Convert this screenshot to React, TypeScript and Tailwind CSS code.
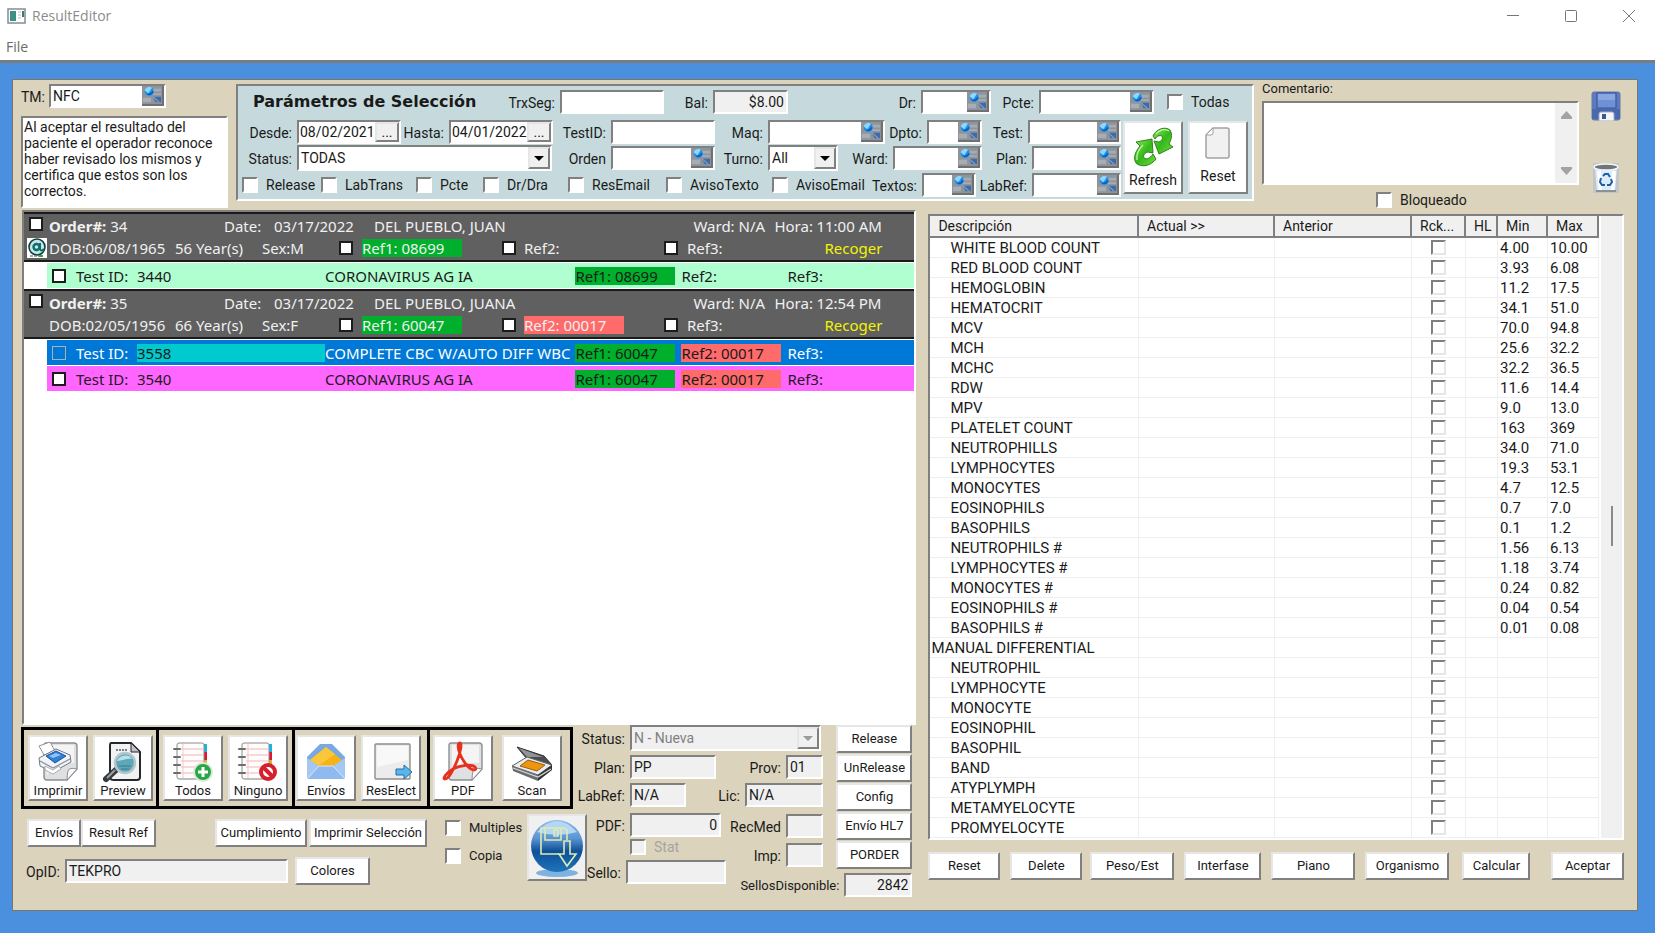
import React from "react";
import clsx from "clsx";

const SUNKEN =
  "border-2 border-t-[#808080] border-l-[#808080] border-b-white border-r-white";
const RAISED =
  "border-2 border-t-[#e6e6e6] border-l-[#e6e6e6] border-b-[#808080] border-r-[#808080]";

/* ---------- Icons ---------- */

const LookupIcon = () => (
  <svg viewBox="0 0 22 20" className="w-full h-full" preserveAspectRatio="none">
    <rect width="22" height="20" fill="#8e949c" />
    <path d="M12 3h9v3h-9zM12 8h9v2h-9z" fill="#a6abb2" />
    <path d="M12 12h9v6h-6z" fill="#3f6aa6" />
    <path d="M1 13h9v5H1z" fill="#a8adb3" />
    <path d="m10 10 9 8" stroke="#7f9cc4" strokeWidth="1.4" />
    <circle cx="8" cy="6" r="5" fill="#1d8fe6" />
    <path d="M3 5a5 5 0 0 1 8-3L7 8z" fill="#8fd6ff" />
    <path d="M6 9c3 1 5-1 6-3" stroke="#0a5cb8" strokeWidth="1.5" fill="none" />
  </svg>
);

const RefreshIcon = () => (
  <svg viewBox="0 0 40 40" className="w-10 h-10">
    <defs>
      <linearGradient id="green" x1="0" y1="0" x2="1" y2="1">
        <stop offset="0" stopColor="#8be85a" />
        <stop offset="0.5" stopColor="#35b81c" />
        <stop offset="1" stopColor="#6fdd3c" />
      </linearGradient>
    </defs>
    <g fill="url(#green)" stroke="#22780f" strokeWidth="0.9" strokeLinejoin="round">
      <path d="M3 15 19 12l1 14-5-1c-4 1-5 4-4 6 3 2 6 0 9-4l3 5c-5 7-15 9-20 4-3-5-1-11 4-17z" />
      <path d="M20 9C23 2 32-1 37 3c3 5 1 10-1 14l4 3-14 7-5-13 5 1c3-1 4-4 3-6-3-1-5 0-7 3z" />
    </g>
    <path d="M23 7c3-4 9-6 13-3M4 33c-1-6 2-11 6-15" stroke="#c8f9ab" strokeWidth="1.2" fill="none" />
  </svg>
);

const PageIcon = () => (
  <svg viewBox="0 0 26 32" className="w-[26px] h-8">
    <path
      d="M8 1h14a2 2 0 0 1 2 2v26a2 2 0 0 1-2 2H3a2 2 0 0 1-2-2V8z"
      fill="#f1f1f2"
      stroke="#a2a2a4"
      strokeWidth="1.5"
    />
    <path d="M8 1v5a2 2 0 0 1-2 2H1z" fill="#fff" stroke="#a2a2a4" />
  </svg>
);

const FloppyIcon = () => (
  <svg viewBox="0 0 30 30" className="w-[30px] h-[30px]">
    <rect x="1" y="1" width="28" height="28" rx="2" fill="#5b7abf" stroke="#6579a8" />
    <rect x="6" y="2" width="19" height="15" fill="#6f90d2" stroke="#34519a" />
    <path d="M7 3h17v6H7z" fill="#8aa6de" />
    <path d="M1 18h28v10H1z" fill="#4a68ac" />
    <path d="M8 30v-7q0-2 2-2h11q2 0 2 2v7z" fill="#f3f5f9" stroke="#a3adc4" />
    <rect x="11" y="23" width="4" height="5" fill="#3c5794" />
  </svg>
);

const TrashIcon = () => (
  <svg viewBox="0 0 26 30" className="w-[26px] h-[30px]">
    <rect width="26" height="30" fill="#c3c6c9" />
    <path d="M2 4h22l-2 25H4z" fill="#dcecfb" />
    <path d="M4 8h4l1 20H6zM19 8h4l-2 20h-3z" fill="#fff" />
    <ellipse cx="13" cy="4" rx="12" ry="3" fill="#70757b" stroke="#f4f6f8" strokeWidth="1.5" />
    <path d="M3 28h20" stroke="#8a9299" strokeWidth="2" />
    <g fill="none" stroke="#1d5fa8" strokeWidth="2">
      <path d="m10 13 2-2h3l2 3" />
      <path d="m8 15-1 4 2 3h3" />
      <path d="m18 16 1 3-2 3h-3" />
    </g>
  </svg>
);

const Sheet = () => (
  <>
    <path
      d="M10 2h28q3 0 3 3v23L31 39H11q-3 0-3-3V5q0-3 2-3z"
      fill="#dfe0e2"
      stroke="#8c8e92"
      strokeWidth="1.4"
    />
    <path d="M11 4h27v18Q20 20 11 34z" fill="#f4f4f5" />
    <path d="M41 28q-8-2-9 2-1 4-1 9z" fill="#fafafa" stroke="#8c8e92" />
  </>
);

const PrintIcon = () => (
  <svg viewBox="0 0 44 42" className="w-11 h-[42px]">
    <Sheet />
    <path d="m3 5 11-4 5 9-11 4z" fill="#fff" stroke="#8d9299" />
    <path d="M3 17 20 8l14 6 1 7-18 10L4 25z" fill="#f2f4f7" stroke="#717780" />
    <path d="m10 15 10-5 10 5-11 7z" fill="#2f7fd6" stroke="#1c559e" />
    <path d="m13 15 7-3 5 2-8 3z" fill="#8fc5f6" />
    <path d="m4 20 13 7 17-9" fill="none" stroke="#8d949e" strokeWidth="1.3" />
    <path d="m9 25 8 4 6-4 2 3-8 5-8-4z" fill="#fff" stroke="#a7adb5" />
  </svg>
);

const PreviewIcon = () => (
  <svg viewBox="0 0 44 42" className="w-11 h-[42px]">
    <path
      d="M10 2h20l9 9v25q0 3-3 3H13q-4 0-4-3V5q0-3 1-3z"
      fill="#f1f2f3"
      stroke="#26282b"
      strokeWidth="2"
    />
    <path d="M30 2v9h9z" fill="#bfc3c8" stroke="#26282b" />
    <path d="M15 9h12" stroke="#555" strokeWidth="1.4" strokeDasharray="2 1" />
    <path d="m16 28-11 10" stroke="#36393d" strokeWidth="6" strokeLinecap="round" />
    <path d="m14 29-8 8" stroke="#9ba0a6" strokeWidth="2" />
    <circle cx="24" cy="22" r="10" fill="#5fa7b8" stroke="#b8c6cc" strokeWidth="2.4" />
    <path d="M16 20c2-6 12-8 15-2-5-1-9 2-15 2z" fill="#b4e2e9" />
    <path d="M18 25h12M20 28h8" stroke="#337d92" />
  </svg>
);

const Notebook = ({ children }: { children: React.ReactNode }) => (
  <svg viewBox="0 0 44 42" className="w-11 h-[42px]">
    <path d="M33 3h3v8h-3z" fill="#16b7e8" />
    <path d="M33 11h3v8h-3z" fill="#e01530" />
    <path d="M33 19h3v8h-3z" fill="#d9b928" />
    <rect x="6" y="2" width="27" height="36" rx="2" fill="#fdfdfd" stroke="#8c8c8c" />
    <path d="M8 37h24v2H8z" fill="#bdbdbd" />
    <path d="M10 8h22M10 14h22M10 20h22M10 26h22M10 32h22" stroke="#f5b3b3" />
    <path d="M12 3v34" stroke="#f1c9c9" />
    <path
      d="M3 8h6M3 16h6M3 24h6M3 32h6"
      stroke="#6e6e6e"
      strokeWidth="2"
      strokeLinecap="round"
    />
    {children}
  </svg>
);

const AllIcon = () => (
  <Notebook>
    <circle cx="32" cy="31" r="9" fill="#27a844" stroke="#dfe5df" strokeWidth="2" />
    <path d="M32 26v10M27 31h10" stroke="#fff" strokeWidth="3" />
  </Notebook>
);

const NoneIcon = () => (
  <Notebook>
    <circle cx="32" cy="31" r="7" fill="#fff" stroke="#d8202c" strokeWidth="4" />
    <path d="m27 26 10 10" stroke="#d8202c" strokeWidth="4" />
  </Notebook>
);

const EnvelopeIcon = () => (
  <svg viewBox="0 0 44 42" className="w-11 h-[42px]">
    <path d="M3 16 16 3h12l13 13v22H3z" fill="#76a9e6" />
    <path d="M6 19 22 6l16 13-16 13z" fill="#f5b316" />
    <path d="M6 19 22 6l9 7-17 12z" fill="#fbc73a" />
    <path d="m3 17 12 8L3 38zM41 17l-12 8 12 13z" fill="#a5c8f3" />
    <path d="m3 38 12-13h14l12 13z" fill="#8fb9ef" />
    <path d="m3 38 12-13h14l12 13" fill="none" stroke="#d9e9fc" />
  </svg>
);

const ResElectIcon = () => (
  <svg viewBox="0 0 44 42" className="w-11 h-[42px]">
    <rect x="6" y="3" width="35" height="35" rx="1" fill="#ececed" stroke="#8d8d8f" strokeWidth="1.4" />
    <path d="M8 5h31v14L8 26z" fill="#f8f8f8" />
    <path
      d="M27 28h8v-4l8 7-8 7v-4h-8z"
      fill="#58b6ef"
      stroke="#2a6d9c"
      strokeLinejoin="round"
    />
  </svg>
);

const PdfIcon = () => (
  <svg viewBox="0 0 44 42" className="w-11 h-[42px]">
    <Sheet />
    <path
      d="M19 2c-3 0-2 6 0 11s7 13 11 15 6 0 4-2c-3-3-15-2-22 2S1 38 4 38s8-8 12-18 5-18 3-18z"
      fill="none"
      stroke="#e7311f"
      strokeWidth="2.8"
      strokeLinejoin="round"
    />
  </svg>
);

const ScanIcon = () => (
  <svg viewBox="0 0 44 42" className="w-11 h-[42px]">
    <path d="m7 6 27 9 8 9-25-6z" fill="#4a4d50" stroke="#2f3133" />
    <path d="m9 7 24 9-16 0z" fill="#90959a" />
    <path d="m2 25 15-9 25 8-14 10z" fill="#ececec" stroke="#5c5f62" />
    <path d="m10 25 8-6 17 5-8 6z" fill="#ee9413" stroke="#9b5d08" />
    <path d="m2 25 26 9v6L3 30z" fill="#6a6d70" />
    <path d="m28 34 14-10v5L28 40z" fill="#303234" />
    <path d="m3 27 25 9 13-8" fill="none" stroke="#d3d6d9" strokeWidth="1.3" />
  </svg>
);

const SaveBallIcon = () => (
  <svg viewBox="0 0 56 60" className="w-14 h-[60px]">
    <defs>
      <linearGradient id="ball" x1="0" y1="0" x2="0" y2="1">
        <stop offset="0" stopColor="#8dbbea" />
        <stop offset="0.35" stopColor="#5b96d3" />
        <stop offset="0.6" stopColor="#0e4f97" />
        <stop offset="1" stopColor="#1d75bd" />
      </linearGradient>
    </defs>
    <ellipse cx="28" cy="55" rx="21" ry="4" fill="#7fb2df" />
    <circle cx="28" cy="28" r="26" fill="url(#ball)" />
    <path d="M8 14Q28-8 48 14q-20 6-40 0z" fill="#b6d6f5" />
    <g fill="none" stroke="#dcecb0" strokeWidth="1.6">
      <path d="M38 22V12l-3-2H12v26h18" />
      <path d="M16 10v12h16V10M25 12v6h4v-6z" />
      <path d="M35 23h6v13h6L38 48 30 36h5z" />
    </g>
  </svg>
);

const AtIcon = () => (
  <svg viewBox="0 0 20 20" className="w-5 h-5">
    <rect width="20" height="20" fill="#fff" />
    <circle cx="10" cy="9" r="8" fill="#c9e4e4" stroke="#10403f" strokeWidth="1.6" />
    <circle cx="9.500" cy="9" r="3" fill="none" stroke="#05706c" strokeWidth="2.4" />
    <path d="M13 5v6q1 3 4 0" fill="none" stroke="#05706c" strokeWidth="2" />
    <path d="M3 18h13" stroke="#555" strokeDasharray="3 1" />
    <path d="M12 17h4v2h-4z" fill="#3aa53a" />
  </svg>
);

/* ---------- Controls ---------- */

type InputProps = {
  id: string;
  value?: string;
  className?: string;
  readOnly?: boolean;
};

const TextField = ({ id, value = "", className, readOnly }: InputProps) => (
  <input
    id={id}
    type="text"
    defaultValue={value}
    readOnly={readOnly}
    className={clsx(
      SUNKEN,
      "w-full min-w-0 h-6 px-[2px] outline-none",
      readOnly ? "bg-[#f0f0f0]" : "bg-white",
      className
    )}
  />
);

const LookupField = ({ id, value = "" }: InputProps) => (
  <div className={clsx(SUNKEN, "flex h-6 min-w-0 bg-white")}>
    <input
      id={id}
      type="text"
      defaultValue={value}
      className="flex-1 min-w-0 px-[2px] outline-none"
    />
    <button
      type="button"
      aria-label="Buscar"
      className="w-[22px] shrink-0 border-r-2 border-b-2 border-[#707070]"
    >
      <LookupIcon />
    </button>
  </div>
);

const DateField = ({ id, value = "" }: InputProps) => (
  <div className={clsx(SUNKEN, "flex h-6 min-w-0 bg-white")}>
    <input
      id={id}
      type="text"
      defaultValue={value}
      className="flex-1 min-w-0 pl-px outline-none"
    />
    <button
      type="button"
      aria-label="Calendario"
      className={clsx(RAISED, "w-6 shrink-0 bg-[#f0f0f0] leading-none")}
    >
      ...
    </button>
  </div>
);

const SelectField = ({
  id,
  value,
  disabled,
}: {
  id: string;
  value: string;
  disabled?: boolean;
}) => (
  <div
    className={clsx(
      SUNKEN,
      "relative h-[26px] min-w-0",
      disabled ? "bg-[#f0f0f0] text-[#808080]" : "bg-white"
    )}
  >
    <select
      id={id}
      defaultValue={value}
      disabled={disabled}
      className="w-full h-full px-[2px] appearance-none outline-none"
    >
      <option>{value}</option>
    </select>
    <span
      aria-hidden="true"
      className={clsx(
        RAISED,
        "absolute right-0 inset-y-0 w-[22px] flex items-center justify-center bg-[#f0f0f0] pointer-events-none"
      )}
    >
      <svg viewBox="0 0 10 5" className="w-[10px] h-[5px]">
        <path d="M0 0h10L5 5z" fill={disabled ? "#9a9a9a" : "#000"} />
      </svg>
    </span>
  </div>
);

const FieldLabel = ({
  htmlFor,
  children,
}: {
  htmlFor: string;
  children: React.ReactNode;
}) => (
  <label
    htmlFor={htmlFor}
    className="flex justify-end pr-[5px] pt-[2px] whitespace-nowrap"
  >
    {children}
  </label>
);

const CheckField = ({
  label,
  disabled,
}: {
  label: string;
  disabled?: boolean;
}) => (
  <label
    className={clsx(
      "flex items-center gap-2 leading-4 whitespace-nowrap",
      disabled && "text-[#a5a5a0]"
    )}
  >
    <input
      type="checkbox"
      disabled={disabled}
      className={clsx(
        SUNKEN,
        "appearance-none w-4 h-4 shrink-0",
        disabled ? "bg-[#f0f0f0]" : "bg-white checked:bg-[#0078d7]"
      )}
    />
    {label}
  </label>
);

const BlackCheck = ({ label, plain }: { label: string; plain?: boolean }) => (
  <input
    type="checkbox"
    aria-label={label}
    className={clsx(
      "appearance-none block w-[14px] h-[14px]",
      plain ? "border border-[#b0b0b0]" : "border-2 border-[#1c1c1c] bg-white"
    )}
  />
);

const Button = ({
  children,
  className,
}: {
  children: React.ReactNode;
  className?: string;
}) => (
  <button
    type="button"
    className={clsx(
      RAISED,
      "h-7 bg-white text-[13px] text-center whitespace-nowrap",
      className
    )}
  >
    {children}
  </button>
);

const ToolButton = ({
  label,
  icon,
}: {
  label: string;
  icon: React.ReactNode;
}) => (
  <button
    type="button"
    className={clsx(
      RAISED,
      "w-[60px] h-[66px] flex flex-col items-center justify-between bg-white text-[13px] whitespace-nowrap leading-4 pt-1"
    )}
  >
    {icon}
    {label}
  </button>
);

/* ---------- Data ---------- */

type Test = {
  id: string;
  name: string;
  ref1: string;
  ref2?: string;
  tone: "mint" | "selected" | "pink";
};

type Order = {
  number: string;
  date: string;
  patient: string;
  time: string;
  dob: string;
  age: string;
  sex: string;
  ref1: string;
  ref2?: string;
  email?: boolean;
  tests: Test[];
};

const orders: Order[] = [
  {
    number: "34",
    date: "03/17/2022",
    patient: "DEL PUEBLO, JUAN",
    time: "11:00 AM",
    dob: "06/08/1965",
    age: "56",
    sex: "M",
    ref1: "08699",
    email: true,
    tests: [
      { id: "3440", name: "CORONAVIRUS AG IA", ref1: "08699", tone: "mint" },
    ],
  },
  {
    number: "35",
    date: "03/17/2022",
    patient: "DEL PUEBLO, JUANA",
    time: "12:54 PM",
    dob: "02/05/1956",
    age: "66",
    sex: "F",
    ref1: "60047",
    ref2: "00017",
    tests: [
      {
        id: "3558",
        name: "COMPLETE CBC W/AUTO DIFF WBC",
        ref1: "60047",
        ref2: "00017",
        tone: "selected",
      },
      {
        id: "3540",
        name: "CORONAVIRUS AG IA",
        ref1: "60047",
        ref2: "00017",
        tone: "pink",
      },
    ],
  },
];

const results: [string, string?, string?][] = [
  ["WHITE BLOOD COUNT", "4.00", "10.00"],
  ["RED BLOOD COUNT", "3.93", "6.08"],
  ["HEMOGLOBIN", "11.2", "17.5"],
  ["HEMATOCRIT", "34.1", "51.0"],
  ["MCV", "70.0", "94.8"],
  ["MCH", "25.6", "32.2"],
  ["MCHC", "32.2", "36.5"],
  ["RDW", "11.6", "14.4"],
  ["MPV", "9.0", "13.0"],
  ["PLATELET COUNT", "163", "369"],
  ["NEUTROPHILLS", "34.0", "71.0"],
  ["LYMPHOCYTES", "19.3", "53.1"],
  ["MONOCYTES", "4.7", "12.5"],
  ["EOSINOPHILS", "0.7", "7.0"],
  ["BASOPHILS", "0.1", "1.2"],
  ["NEUTROPHILS #", "1.56", "6.13"],
  ["LYMPHOCYTES #", "1.18", "3.74"],
  ["MONOCYTES #", "0.24", "0.82"],
  ["EOSINOPHILS #", "0.04", "0.54"],
  ["BASOPHILS #", "0.01", "0.08"],
  ["MANUAL DIFFERENTIAL"],
  ["NEUTROPHIL"],
  ["LYMPHOCYTE"],
  ["MONOCYTE"],
  ["EOSINOPHIL"],
  ["BASOPHIL"],
  ["BAND"],
  ["ATYPLYMPH"],
  ["METAMYELOCYTE"],
  ["PROMYELOCYTE"],
];

/* ---------- Sections ---------- */

const TitleBar = () => (
  <header className="h-[60px] bg-white font-['Open_Sans']">
    <div className="flex items-center h-8 pl-[7px] pr-5">
      <svg viewBox="0 0 19 16" className="w-[19px] h-4">
        <rect x="1" y="1" width="17" height="14" fill="#fff" stroke="#868c92" strokeWidth="1.5" />
        <rect x="3" y="3" width="6" height="10" fill="#3c8f86" />
        <path d="M11 4h3M11 7h3M11 10h3" stroke="#b5b9bd" />
        <path d="M15 3h2v6h-2z" fill="#3a7d74" />
      </svg>
      <span className="ml-[6px] text-sm text-[#8c8c8c]">ResultEditor</span>
      <div className="ml-auto flex gap-[46px] text-[#777]">
        <button type="button" aria-label="Minimizar">
          <svg viewBox="0 0 12 12" className="w-3 h-3">
            <path d="M0 5.500h12" stroke="currentColor" />
          </svg>
        </button>
        <button type="button" aria-label="Maximizar">
          <svg viewBox="0 0 12 12" className="w-3 h-3">
            <rect x=".5" y=".5" width="11" height="11" rx="1" fill="none" stroke="currentColor" />
          </svg>
        </button>
        <button type="button" aria-label="Cerrar">
          <svg viewBox="0 0 12 12" className="w-3 h-3">
            <path d="m0 0 12 12M12 0 0 12" stroke="currentColor" />
          </svg>
        </button>
      </div>
    </div>
    <nav className="pl-[6px] text-sm leading-[30px] text-[#6b6b6b]">
      <button type="button">File</button>
    </nav>
  </header>
);

const Operator = () => (
  <div className="w-[207px] shrink-0 pt-1">
    <div className="grid grid-cols-[28px_117px] items-center">
      <label htmlFor="tm" className="pt-[2px]">
        TM:
      </label>
      <LookupField id="tm" value="NFC" />
    </div>
    <textarea
      aria-label="Aviso"
      readOnly
      defaultValue="Al aceptar el resultado del paciente el operador reconoce haber revisado los mismos y certifica que estos son los correctos."
      className={clsx(
        SUNKEN,
        "block w-full h-[92px] mt-2 pl-px pr-1 py-px bg-white leading-4 resize-none outline-none overflow-hidden"
      )}
    />
  </div>
);

const Filters = () => (
  <section
    className={clsx(SUNKEN, "flex-1 min-w-0 mt-1 mb-[7px] pl-px bg-[#c6dadd]")}
  >
    <div className="grid grid-cols-[238px_83px_104px_49px_75px_minmax(0,1fr)_70px_48px_115px_13px_85px] items-center h-8">
      <h1 className="pl-[14px] text-base leading-5 pb-px font-bold font-['DejaVu_Sans'] whitespace-nowrap">
        Parámetros de Selección
      </h1>
      <FieldLabel htmlFor="trx">TrxSeg:</FieldLabel>
      <TextField id="trx" />
      <FieldLabel htmlFor="bal">Bal:</FieldLabel>
      <TextField id="bal" value="$8.00" readOnly className="text-right" />
      <FieldLabel htmlFor="dr">Dr:</FieldLabel>
      <LookupField id="dr" />
      <FieldLabel htmlFor="pcte">Pcte:</FieldLabel>
      <LookupField id="pcte" />
      <span />
      <CheckField label="Todas" />
    </div>
    <div className="flex">
      <div className="flex-1 min-w-0">
        <div className="grid grid-cols-[58px_104px_48px_104px_58px_104px_53px_minmax(0,1fr)_42px_55px_46px_93px] items-center h-[27px]">
          <FieldLabel htmlFor="desde">Desde:</FieldLabel>
          <DateField id="desde" value="08/02/2021" />
          <FieldLabel htmlFor="hasta">Hasta:</FieldLabel>
          <DateField id="hasta" value="04/01/2022" />
          <FieldLabel htmlFor="testid">TestID:</FieldLabel>
          <TextField id="testid" />
          <FieldLabel htmlFor="maq">Maq:</FieldLabel>
          <LookupField id="maq" />
          <FieldLabel htmlFor="dpto">Dpto:</FieldLabel>
          <LookupField id="dpto" />
          <FieldLabel htmlFor="test">Test:</FieldLabel>
          <LookupField id="test" />
        </div>
        <div className="grid grid-cols-[58px_255px_59px_104px_53px_70px_55px_minmax(0,1fr)_50px_89px] items-center h-[26px]">
          <FieldLabel htmlFor="fstatus">Status:</FieldLabel>
          <SelectField id="fstatus" value="TODAS" />
          <FieldLabel htmlFor="orden">Orden</FieldLabel>
          <LookupField id="orden" />
          <FieldLabel htmlFor="turno">Turno:</FieldLabel>
          <SelectField id="turno" value="All" />
          <FieldLabel htmlFor="ward">Ward:</FieldLabel>
          <LookupField id="ward" />
          <FieldLabel htmlFor="fplan">Plan:</FieldLabel>
          <LookupField id="fplan" />
        </div>
        <div className="grid grid-cols-[79px_95px_67px_85px_98px_106px_101px_minmax(0,1fr)_54px_56px_89px] items-center h-[27px] pl-[3px]">
          <CheckField label="Release" />
          <CheckField label="LabTrans" />
          <CheckField label="Pcte" />
          <CheckField label="Dr/Dra" />
          <CheckField label="ResEmail" />
          <CheckField label="AvisoTexto" />
          <CheckField label="AvisoEmail" />
          <FieldLabel htmlFor="textos">Textos:</FieldLabel>
          <LookupField id="textos" />
          <FieldLabel htmlFor="flabref">LabRef:</FieldLabel>
          <LookupField id="flabref" />
        </div>
      </div>
      <div className="flex gap-[5px] pl-[2px] pr-1 pt-[3px]">
        <button
          type="button"
          className={clsx(
            RAISED,
            "w-[60px] h-[73px] flex flex-col items-center justify-between pt-1 pb-1 bg-white leading-4"
          )}
        >
          <RefreshIcon />
          Refresh
        </button>
        <button
          type="button"
          className={clsx(
            RAISED,
            "w-[60px] h-[73px] flex flex-col items-center justify-between pt-1 pb-2 bg-white leading-4"
          )}
        >
          <PageIcon />
          Reset
        </button>
      </div>
    </div>
  </section>
);

const Comments = () => (
  <section className="w-[362px] shrink-0 flex justify-between">
    <div className="w-[317px]">
      <label htmlFor="comentario" className="block text-[13px] leading-[18px]">
        Comentario:
      </label>
      <div className={clsx(SUNKEN, "flex h-[84px] mt-[3px] bg-white")}>
        <textarea
          id="comentario"
          className="flex-1 min-w-0 resize-none outline-none"
        />
        <div
          aria-hidden="true"
          className="w-[22px] flex flex-col items-center justify-between py-2 bg-[#f0f0f0]"
        >
          <svg viewBox="0 0 11 8" className="w-[11px] h-2">
            <path d="M5.500 0 11 6v2H0V6z" fill="#a3a3a3" />
          </svg>
          <svg viewBox="0 0 11 8" className="w-[11px] h-2">
            <path d="M5.500 8 11 2V0H0v2z" fill="#a3a3a3" />
          </svg>
        </div>
      </div>
      <div className="pl-[114px] pt-[7px]">
        <CheckField label="Bloqueado" />
      </div>
    </div>
    <div className="flex flex-col items-center gap-[42px] pt-[11px] pr-[3px]">
      <button type="button" aria-label="Guardar" className="h-[30px]">
        <FloppyIcon />
      </button>
      <button type="button" aria-label="Borrar" className="h-[30px]">
        <TrashIcon />
      </button>
    </div>
  </section>
);

const OrderHeader = ({ order }: { order: Order }) => (
  <div className="h-[50px] pt-px pr-8 bg-[#606060] text-[#f0f0f0] border-t-2 border-b-2 border-[#1a1a1a] leading-[22px] whitespace-nowrap">
    <div className="grid grid-cols-[25px_175px_50px_100px_minmax(0,1fr)_81px_42px_66px]">
      <span className="pl-[5px] pt-[2px]">
        <BlackCheck label={`Order ${order.number}`} />
      </span>
      <span>
        <b>Order#:</b> {order.number}
      </span>
      <span>Date:</span>
      <span>{order.date}</span>
      <span>{order.patient}</span>
      <span>Ward: N/A</span>
      <span>Hora:</span>
      <span>{order.time}</span>
    </div>
    <div className="grid grid-cols-[25px_126px_87px_77px_23px_140px_22px_140px_23px_minmax(0,1fr)] items-center">
      <span className="pl-[3px]">{order.email && <AtIcon />}</span>
      <span>DOB:{order.dob}</span>
      <span>{order.age} Year(s)</span>
      <span>Sex:{order.sex}</span>
      <BlackCheck label="Ref1" />
      <span className="w-[100px] leading-[18px] bg-[#00b02c]">
        Ref1: {order.ref1}
      </span>
      <BlackCheck label="Ref2" />
      <span
        className={clsx("w-[100px] leading-[18px]", order.ref2 && "bg-[#ff6b6b]")}
      >
        Ref2: {order.ref2}
      </span>
      <BlackCheck label="Ref3" />
      <span className="flex justify-between">
        <span>Ref3:</span>
        <span className="text-[#f4f400]">Recoger</span>
      </span>
    </div>
  </div>
);

const TestRow = ({ test }: { test: Test }) => {
  const selected = test.tone === "selected";
  return (
    <div
      className={clsx(
        "grid grid-cols-[29px_61px_188px_minmax(0,1fr)_106px_106px_127px] items-center h-[25px] ml-[23px] my-px leading-[18px] whitespace-nowrap",
        test.tone === "mint" && "bg-[#b0ffd0] text-[#1a1a1a]",
        test.tone === "pink" && "bg-[#ff66ff] text-[#1a1a1a]",
        selected && "bg-[#0078d7] text-white"
      )}
    >
      <span className="pl-[5px]">
        <BlackCheck label={`Test ${test.id}`} plain={selected} />
      </span>
      <span>Test ID:</span>
      <span className={clsx(selected && "bg-[#00cace] text-[#1a1a1a]")}>
        {test.id}
      </span>
      <span>{test.name}</span>
      <span className="w-[100px] bg-[#00b02c] text-[#1a1a1a]">
        Ref1: {test.ref1}
      </span>
      <span
        className={clsx("w-[100px]", test.ref2 && "bg-[#ff6b6b] text-[#1a1a1a]")}
      >
        Ref2: {test.ref2}
      </span>
      <span>Ref3:</span>
    </div>
  );
};

const OrderList = () => (
  <div
    className={clsx(
      SUNKEN,
      "flex-1 ml-px bg-white font-['Noto_Sans'] text-[15px]"
    )}
  >
    {orders.map((order) => (
      <div key={order.number}>
        <OrderHeader order={order} />
        {order.tests.map((test) => (
          <TestRow key={test.id} test={test} />
        ))}
      </div>
    ))}
  </div>
);

const Toolbar = () => (
  <div className="flex w-[552px] h-[82px] border-[3px] border-black divide-x-[3px] divide-black">
    <div className="flex items-center gap-[5px] w-[135px] pl-1">
      <ToolButton label="Imprimir" icon={<PrintIcon />} />
      <ToolButton label="Preview" icon={<PreviewIcon />} />
    </div>
    <div className="flex items-center gap-[5px] w-[136px] pl-1">
      <ToolButton label="Todos" icon={<AllIcon />} />
      <ToolButton label="Ninguno" icon={<NoneIcon />} />
    </div>
    <div className="flex items-center gap-[5px] w-[135px] pl-px">
      <ToolButton label="Envíos" icon={<EnvelopeIcon />} />
      <ToolButton label="ResElect" icon={<ResElectIcon />} />
    </div>
    <div className="flex items-center gap-[9px] flex-1 pl-[3px]">
      <ToolButton label="PDF" icon={<PdfIcon />} />
      <ToolButton label="Scan" icon={<ScanIcon />} />
    </div>
  </div>
);

const Actions = () => (
  <div className="w-[566px] shrink-0 pt-[2px]">
    <Toolbar />
    <div className="flex pt-[5px]">
      <div className="w-[406px] pt-[5px]">
        <div className="flex pl-[6px]">
          <Button className="w-[54px]">Envíos</Button>
          <Button className="w-[75px]">Result Ref</Button>
          <Button className="w-[92px] ml-auto">Cumplimiento</Button>
          <Button className="w-[118px] ml-[2px]">Imprimir Selección</Button>
        </div>
        <div className="grid grid-cols-[44px_223px_7px_75px] items-center mt-[10px]">
          <FieldLabel htmlFor="opid">OpID:</FieldLabel>
          <TextField id="opid" value="TEKPRO" readOnly />
          <span />
          <Button>Colores</Button>
        </div>
      </div>
      <div className="flex flex-col gap-3 pl-[18px] pt-[6px] text-[13px]">
        <CheckField label="Multiples" />
        <CheckField label="Copia" />
      </div>
      <button
        type="button"
        aria-label="Guardar resultados"
        className={clsx(RAISED, "w-[60px] h-[67px] ml-auto bg-[#f0f0f0]")}
      >
        <SaveBallIcon />
      </button>
    </div>
  </div>
);

const OrderDetail = () => (
  <div className="flex-1 pr-1">
    <div className="flex justify-between">
      <div className="w-[236px] flex flex-col gap-1">
        <div className="grid grid-cols-[43px_191px] items-center">
          <FieldLabel htmlFor="status">Status:</FieldLabel>
          <SelectField id="status" value="N - Nueva" disabled />
        </div>
        <div className="grid grid-cols-[43px_86px_70px_37px] items-center">
          <FieldLabel htmlFor="plan">Plan:</FieldLabel>
          <TextField id="plan" value="PP" readOnly />
          <FieldLabel htmlFor="prov">Prov:</FieldLabel>
          <TextField id="prov" value="01" readOnly />
        </div>
        <div className="grid grid-cols-[43px_56px_59px_78px] items-center">
          <FieldLabel htmlFor="labref">LabRef:</FieldLabel>
          <TextField id="labref" value="N/A" readOnly />
          <FieldLabel htmlFor="lic">Lic:</FieldLabel>
          <TextField id="lic" value="N/A" readOnly />
        </div>
      </div>
      <div className="w-[76px] flex flex-col gap-px">
        <Button>Release</Button>
        <Button>UnRelease</Button>
        <Button>Config</Button>
      </div>
    </div>
    <div className="flex">
      <div className="w-[139px] pt-[2px]">
        <div className="grid grid-cols-[43px_91px] items-center">
          <FieldLabel htmlFor="pdf">PDF:</FieldLabel>
          <TextField id="pdf" value="0" readOnly className="text-right" />
        </div>
        <div className="pl-[43px] pt-[2px] pb-[5px]">
          <CheckField label="Stat" disabled />
        </div>
        <div className="grid grid-cols-[39px_100px] items-center">
          <FieldLabel htmlFor="sello">Sello:</FieldLabel>
          <TextField id="sello" readOnly />
        </div>
      </div>
      <div className="flex-1 flex flex-col items-end">
        <div className="w-full flex justify-between">
          <div className="grid grid-cols-[60px_37px] items-center">
            <FieldLabel htmlFor="recmed">RecMed</FieldLabel>
            <TextField id="recmed" readOnly />
            <FieldLabel htmlFor="imp">Imp:</FieldLabel>
            <TextField id="imp" readOnly />
          </div>
          <div className="w-[76px] flex flex-col gap-px pt-px">
            <Button>Envío HL7</Button>
            <Button>PORDER</Button>
          </div>
        </div>
        <div className="grid grid-cols-[104px_68px] items-center mt-1 text-[13px]">
          <FieldLabel htmlFor="sellos">SellosDisponible:</FieldLabel>
          <TextField
            id="sellos"
            value="2842"
            readOnly
            className="text-sm text-right"
          />
        </div>
      </div>
    </div>
  </div>
);

const HEAD_CELL =
  "h-[21px] text-left font-normal bg-[#f0f0f0] border-r-2 border-b-2 border-[#808080] truncate";
const CELL = "h-5 p-0 border-r border-b border-[#efefef]";

const Results = () => (
  <div className={clsx(SUNKEN, "flex mt-1 bg-white")}>
    <table className="flex-1 table-fixed border-separate border-spacing-0 text-[15px] leading-[18px]">
      <colgroup>
        <col />
        <col className="w-[136px]" />
        <col className="w-[137px]" />
        <col className="w-[54px]" />
        <col className="w-[32px]" />
        <col className="w-[50px]" />
        <col className="w-[51px]" />
      </colgroup>
      <thead className="text-sm">
        <tr>
          <th className={clsx(HEAD_CELL, "pl-2")}>Descripción</th>
          <th className={clsx(HEAD_CELL, "pl-2")}>Actual &gt;&gt;</th>
          <th className={clsx(HEAD_CELL, "pl-2")}>Anterior</th>
          <th className={clsx(HEAD_CELL, "pl-2")}>Rck...</th>
          <th className={clsx(HEAD_CELL, "pl-2")}>HL</th>
          <th className={clsx(HEAD_CELL, "pl-2")}>Min</th>
          <th className={clsx(HEAD_CELL, "pl-2")}>Max</th>
        </tr>
      </thead>
      <tbody>
        {results.map(([name, min, max]) => (
          <tr key={name}>
            <td
              className={clsx(
                CELL,
                name === "MANUAL DIFFERENTIAL" ? "pl-px" : "pl-5"
              )}
            >
              {name}
            </td>
            <td className={CELL} />
            <td className={CELL} />
            <td className={CELL}>
              <input
                type="checkbox"
                aria-label={name}
                className="appearance-none block mx-auto w-[15px] h-[15px] border-2 border-t-[#808080] border-l-[#808080] border-b-[#e6e6e6] border-r-[#e6e6e6]"
              />
            </td>
            <td className={CELL} />
            <td className={clsx(CELL, "pl-[2px]")}>{min}</td>
            <td className={clsx(CELL, "pl-[2px]")}>{max}</td>
          </tr>
        ))}
      </tbody>
    </table>
    <div
      aria-hidden="true"
      className="w-[21px] ml-[2px] flex justify-center bg-[#f0f0f0]"
    >
      <span className="w-[2px] h-10 mt-[290px] bg-[#8a8a8a]" />
    </div>
  </div>
);

const ResultActions = () => (
  <div className="flex pt-3">
    <Button className="w-[72px]">Reset</Button>
    <Button className="w-[72px] ml-[10px]">Delete</Button>
    <Button className="w-[84px] ml-2">Peso/Est</Button>
    <Button className="w-[77px] ml-[10px]">Interfase</Button>
    <Button className="w-[84px] ml-[10px]">Piano</Button>
    <Button className="w-[84px] ml-[10px]">Organismo</Button>
    <Button className="w-[68px] ml-[13px]">Calcular</Button>
    <Button className="w-[73px] ml-auto">Aceptar</Button>
  </div>
);

const App: React.FC = () => {
  return (
    <div className="min-h-screen min-w-[1500px] flex flex-col bg-[#4a90de] font-['Roboto',sans-serif] text-sm text-[#1a1a1a]">
      <TitleBar />
      <main className="flex-1 flex flex-col pt-4 pb-[22px] pl-3 pr-[17px] border-t-[3px] border-[#7a7d80]">
        <div className="flex-1 flex flex-col pl-2 pr-[13px] border border-[#77756c] bg-[#dbd3bc]">
          <div className="flex gap-2">
            <Operator />
            <Filters />
            <Comments />
          </div>
          <div className="flex-1 grid grid-cols-[896fr_696fr] gap-3 pt-[2px]">
            <div className="flex flex-col">
              <OrderList />
              <div className="flex pb-[13px]">
                <Actions />
                <OrderDetail />
              </div>
            </div>
            <div>
              <Results />
              <ResultActions />
            </div>
          </div>
        </div>
      </main>
    </div>
  );
};

export default App;
